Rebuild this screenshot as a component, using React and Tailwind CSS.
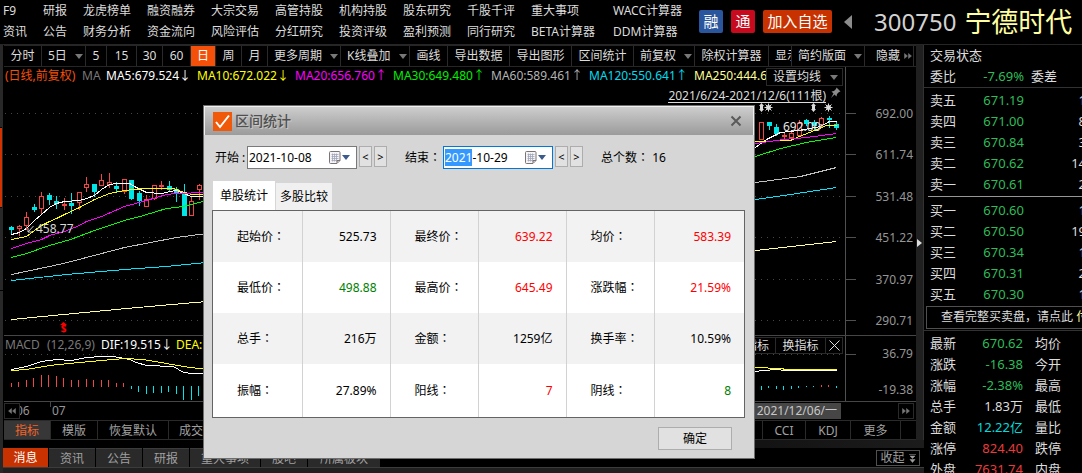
import { useEffect, useRef, useState } from "react";

const FEATURE_LINKS = [
  ["F9", "资讯"],
  ["研报", "公告"],
  ["龙虎榜单", "财务分析"],
  ["融资融券", "资金流向"],
  ["大宗交易", "风险评估"],
  ["高管持股", "分红研究"],
  ["机构持股", "投资评级"],
  ["股东研究", "盈利预测"],
  ["千股千评", "同行研究"],
  ["重大事项", "BETA计算器"],
  ["WACC计算器", "DDM计算器"],
];

const TOOLS = [
  { label: "分时", width: "w-[38px]" },
  { label: "5日", width: "w-[44px]", menu: true },
  { label: "5", width: "w-[21px]" },
  { label: "15", width: "w-[30px]" },
  { label: "30", width: "w-[26px]" },
  { label: "60", width: "w-[28px]" },
  { label: "日", width: "w-[25px]", active: true },
  { label: "周", width: "w-[26px]" },
  { label: "月", width: "w-[26px]" },
  { label: "更多周期", width: "w-[73px]", menu: true },
  { label: "K线叠加", width: "w-[69px]", menu: true },
  { label: "画线", width: "w-[38px]" },
  { label: "导出数据", width: "w-[62px]" },
  { label: "导出图形", width: "w-[62px]" },
  { label: "区间统计", width: "w-[62px]" },
  { label: "前复权", width: "w-[61px]", menu: true },
  { label: "除权计算器", width: "w-[74px]" },
];

const AVERAGES = [
  { text: "MA5:679.524", arrow: "↓", style: "w-[91px] text-white" },
  { text: "MA10:672.022", arrow: "↓", style: "w-[98px] text-[#ffff00]" },
  { text: "MA20:656.760", arrow: "↑", style: "w-[98px] text-[#ff00ff]" },
  { text: "MA30:649.480", arrow: "↑", style: "w-[98px] text-[#00f000]" },
  { text: "MA60:589.461", arrow: "↑", style: "w-[98px] text-[#b4b4b4]" },
  { text: "MA120:550.641", arrow: "↑", style: "w-[105px] text-[#00dcf0]" },
  { text: "MA250:444.6", arrow: "", style: "w-[74px] text-[#ffff96]" },
];

// Series are stored on a grid three times finer than the screen.
const LEFT = { x: 0, y: 100 };
const RIGHT = { x: 740, y: 100 };
const MACD_LEFT = { x: 0, y: 320 };
const MACD_RIGHT = { x: 740, y: 300 };

const RED = "#f04646";
const CYAN = "#00e6e6";

const LINES = [
  [LEFT, "#ffffff", [34,403,58,398,79,385,103,362,124,342,148,323,169,311,193,304,238,301,259,294,283,285,304,268,328,253,349,250,388,250,410,262,439,277,484,280,510,275,530,270,550,280,574,289,620,289]],
  [LEFT, "#ffff00", [34,419,79,408,103,392,124,376,148,364,169,355,193,343,238,322,283,298,328,280,373,271,430,266,520,266,545,275,575,284,620,284]],
  [LEFT, "#ff00ff", [34,445,79,431,124,418,148,407,193,395,238,376,259,364,304,348,373,318,440,300,500,283,530,279,620,277]],
  [LEFT, "#00ff00", [34,473,79,459,148,436,210,417,283,390,373,362,430,347,500,326,550,319,620,302]],
  [LEFT, "#c0c0c0", [34,524,190,491,373,443,530,412,620,399]],
  [LEFT, "#00e6ff", [34,541,200,524,373,509,500,498,620,488]],
  [LEFT, "#ffff96", [34,659,190,643,380,625,620,603]],
  [RIGHT, "#ffffff", [30,150,45,143,80,118,120,96,175,90,240,78,268,64,290,64]],
  [RIGHT, "#ffff00", [30,124,45,124,150,120,178,108,223,92,260,77,290,76]],
  [RIGHT, "#ff00ff", [30,132,45,130,130,118,200,112,290,100]],
  [RIGHT, "#00ff00", [30,174,45,169,120,144,200,126,290,112]],
  [RIGHT, "#c0c0c0", [30,249,45,247,180,228,290,203]],
  [RIGHT, "#00e6ff", [30,300,45,298,150,284,290,262]],
  [RIGHT, "#ffff96", [30,453,45,451,180,436,290,424]],
];

const MACD_LINES = [
  [MACD_LEFT, "#ffffff", [34,149,79,138,124,125,169,119,214,122,259,113,304,109,340,110,388,118,410,128,439,135,520,140,550,156,574,161,620,161]],
  [MACD_LEFT, "#ffff00", [34,152,79,148,148,136,238,126,304,120,373,115,430,119,500,130,550,140,620,148]],
  [MACD_RIGHT, "#ffffff", [30,217,45,215,70,210,110,208,135,212,175,210,290,210]],
  [MACD_RIGHT, "#ffff00", [30,202,45,203,120,205,140,208,290,208]],
];

// x, high, low, body top, body bottom, kind (u = hollow rise, f = filled rise, d = fall)
const CANDLES = [
  [LEFT, [
    [34,378,403,381,392,"d"],[58,375,408,379,387,"u"],[79,336,390,352,380,"u"],[103,312,338,321,332,"d"],
    [124,277,345,289,329,"u"],[148,279,317,286,300,"d"],[169,290,328,303,312,"d"],[193,295,332,314,320,"u"],
    [214,280,342,309,318,"d"],[238,277,332,277,311,"u"],[259,231,278,252,266,"u"],[283,252,292,252,276,"d"],
    [304,222,258,240,258,"u"],[328,219,264,246,255,"u"],[349,248,280,258,267,"d"],[373,238,282,238,276,"u"],
    [394,240,300,240,297,"d"],[418,275,318,279,304,"d"],[439,286,321,298,321,"u"],[463,255,302,255,298,"u"],
    [484,243,272,256,261,"f"],[508,243,275,258,272,"d"],[529,262,308,268,280,"d"],[553,252,350,276,350,"d"],
    [574,290,350,304,350,"u"],[598,252,300,255,272,"u"],
  ]],
  [RIGHT, [
    [64,67,122,67,122,"u"],[88,66,90,66,80,"d"],[109,72,110,82,102,"d"],[133,98,118,106,110,"f"],
    [154,92,118,100,114,"u"],[178,62,112,70,108,"u"],[199,58,80,60,72,"d"],[223,60,90,68,80,"d"],
    [244,52,85,56,76,"u"],[268,48,84,54,60,"d"],[289,68,92,72,84,"d"],
  ]],
];

const MACD_BARS = [
  [MACD_LEFT, RED, [[34,190,201],[55,187,201],[79,181,201],[100,175,201],[124,165,201],[145,165,201],[169,168,201],[190,174,201],[214,180,201],[235,180,201],[259,177,201],[280,180,201],[304,180,201],[325,180,201],[349,190,201],[370,190,201]]],
  [MACD_LEFT, CYAN, [[394,198,207],[415,198,218],[439,198,224],[460,198,221],[484,198,219],[505,198,218],[529,198,224],[550,198,240],[574,198,240],[595,198,228]]],
  [MACD_RIGHT, CYAN, [[64,258,272],[85,258,266],[109,258,268],[130,258,270],[154,258,269],[175,258,264],[199,258,261],[220,258,261],[289,258,264]]],
  [MACD_RIGHT, RED, [[244,255,261],[265,255,261]]],
];

const ASKS = [["卖五", "671.19", "1"], ["卖四", "671.00", "8"], ["卖三", "670.84", "3"], ["卖二", "670.62", "14"], ["卖一", "670.61", "2"]];
const BIDS = [["买一", "670.60", "1"], ["买二", "670.50", "19"], ["买三", "670.34", "1"], ["买四", "670.31", "2"], ["买五", "670.30", "1"]];

const UP = "text-[#e83c3c]";
const DOWN = "text-[#2dbd5a]";
const QUOTES = [
  ["最新", "670.62", DOWN, "均价"],
  ["涨跌", "-16.38", DOWN, "今开"],
  ["涨幅", "-2.38%", DOWN, "最高"],
  ["总手", "1.83万", "text-[#dcdcdc]", "最低"],
  ["金额", "12.22亿", "text-[#00dcdc]", "量比"],
  ["涨停", "824.40", UP, "跌停"],
  ["外盘", "7631.74", UP, "内盘"],
];

const STATS = [
  [["起始价", "525.73", ""], ["最终价", "639.22", "text-[#ff0000]"], ["均价", "583.39", "text-[#ff0000]"]],
  [["最低价", "498.88", "text-[#008000]"], ["最高价", "645.49", "text-[#ff0000]"], ["涨跌幅", "21.59%", "text-[#ff0000]"]],
  [["总手", "216万", ""], ["金额", "1259亿", ""], ["换手率", "10.59%", ""]],
  [["振幅", "27.89%", ""], ["阳线", "7", "text-[#ff0000]"], ["阴线", "8", "text-[#008000]"]],
];

const snap = (v) => Math.floor(v / 3);

function Polyline({ origin, color, data }) {
  const points = [];
  for (let i = 0; i < data.length; i += 2) {
    points.push(`${origin.x + snap(data[i]) + 0.5},${origin.y + snap(data[i + 1]) + 0.5}`);
  }
  return <polyline points={points.join(" ")} fill="none" stroke={color} strokeWidth="1" shapeRendering="crispEdges" />;
}

function Candle({ origin, data }) {
  const [x, high, low, top, bottom, kind] = data;
  const cx = origin.x + snap(x);
  const t = origin.y + snap(top);
  const h = Math.max(2, snap(bottom) - snap(top));
  const color = kind === "d" ? CYAN : RED;
  return (
    <g shapeRendering="crispEdges">
      <rect x={cx} y={origin.y + snap(high)} width="1" height={snap(low) - snap(high)} fill={color} />
      {kind === "u" ? (
        <rect x={cx - 1.5} y={t + 0.5} width="4" height={h - 1} fill="#000" stroke={color} />
      ) : (
        <rect x={cx - 2} y={t} width="5" height={h} fill={color} />
      )}
    </g>
  );
}

function Sun({ x, y }) {
  return (
    <g stroke="#dcdcdc">
      <path d={`M${x - 4} ${y}h8M${x} ${y - 4}v8M${x - 3} ${y - 3}l6 6M${x + 3} ${y - 3}l-6 6`} />
      <circle cx={x} cy={y} r="2" fill="#dcdcdc" />
    </g>
  );
}

function Updown({ x, y }) {
  return <path d={`M${x} ${y - 4.5}l2.5 3h-1v3h1l-2.5 3l-2.5 -3h1v-3h-1z`} fill="#dcdcdc" />;
}

function PriceChart() {
  return (
    <svg className="absolute inset-0 size-full" viewBox="4 67 841 268" preserveAspectRatio="none" aria-hidden="true">
      {[113, 154, 196, 237, 279, 320].map((y) => (
        <line key={y} x1="5" x2="841" y1={y + 0.5} y2={y + 0.5} stroke="#464646" strokeDasharray="1 5" />
      ))}
      {CANDLES.map(([origin, list], i) => list.map((c) => <Candle key={`${i}-${c[0]}`} origin={origin} data={c} />))}
      {LINES.map(([origin, color, data], i) => (
        <Polyline key={i} origin={origin} color={color} data={data} />
      ))}
      <path d="M33.500 226L28 232M28 228v4h4" fill="none" stroke="#d0d0d0" />
      <text x="36" y="233" fontSize="12" fill="#d8d8d8">458.77</text>
      <text x="783" y="131" fontSize="12" fill="#e6e6e6">692.00</text>
      <path d="M818 130l3 -4M819 125h3v3" fill="none" stroke="#d0d0d0" />
      <Updown x={761.5} y={107.5} />
      <Sun x={768.5} y={107.5} />
      <Updown x={813.5} y={107.5} />
      <Sun x={828.5} y={107.5} />
      <path d="M63.500 322l3.500 3h-7z" fill="#ff0000" />
      <text x="63.500" y="332" fontSize="10" fontWeight="700" textAnchor="middle" fill="#ff0000">$</text>
    </svg>
  );
}

function MacdChart() {
  return (
    <svg className="absolute inset-0 size-full" viewBox="4 336 841 65" preserveAspectRatio="none" aria-hidden="true">
      <line x1="5" x2="841" y1="354.500" y2="354.500" stroke="#464646" strokeDasharray="1 5" />
      {MACD_BARS.map(([origin, color, bars]) =>
        bars.map(([x, top, bottom]) => (
          <rect key={`${origin.x}-${x}`} x={origin.x + snap(x)} y={origin.y + snap(top)} width="1" height={snap(bottom) - snap(top)} fill={color} />
        ))
      )}
      {MACD_LINES.map(([origin, color, data], i) => (
        <Polyline key={i} origin={origin} color={color} data={data} />
      ))}
    </svg>
  );
}

function Caret({ className = "text-[#787878]" }) {
  return (
    <svg className={`shrink-0 ${className}`} width="8" height="5" viewBox="0 0 8 5" aria-hidden="true">
      <path d="M0 0h8L4 5z" fill="currentColor" />
    </svg>
  );
}

function DoubleArrow({ left }) {
  return (
    <svg className={left ? "rotate-180" : ""} width="8" height="6" viewBox="0 0 8 6" aria-hidden="true">
      <path d="M0.500 0.500L3.500 3L0.500 5.500zM4.500 0.500L7.500 3L4.500 5.500z" fill="#787878" stroke="#787878" strokeWidth="0.500" />
    </svg>
  );
}

// Full-width colon centred in its cell.
function Colon() {
  return <span className="font-['Noto_Sans_CJK_TC',sans-serif]" lang="zh-Hant">：</span>;
}

function Header() {
  return (
    <header className="flex h-[45px] shrink-0 items-start border-b border-[#262626]">
      <nav className="grid shrink-0 grid-cols-[40px_40px_64px_64px_64px_64px_64px_64px_64px_82px_86px] pl-[3px]">
        {FEATURE_LINKS.map((pair) => (
          <div key={pair[0]} className="flex flex-col text-[12px] leading-[21px] whitespace-nowrap text-[#dcdcdc]">
            <a href="#">{pair[0]}</a>
            <a href="#">{pair[1]}</a>
          </div>
        ))}
      </nav>
      <div className="flex shrink-0 items-center gap-2 pt-[10px] text-[15px] text-white">
        <span className="flex h-[23px] w-[24px] items-center justify-center rounded-xs bg-[#2a569e]">融</span>
        <span className="flex h-[23px] w-[24px] items-center justify-center rounded-xs bg-[#c80a1e]">通</span>
        <button className="flex h-[23px] w-[69px] items-center justify-center rounded-xs bg-[#c83200]">加入自选</button>
        <button aria-label="上一只" className="ml-1">
          <svg width="8" height="14" viewBox="0 0 8 14" aria-hidden="true">
            <path d="M8 0v14L0 7z" fill="#8c8c8c" />
          </svg>
        </button>
      </div>
      <h1 className="ml-[22px] flex shrink-0 items-center gap-2 pt-1 leading-[36px]">
        <span className="text-[24px] text-[#d2d2d2]">300750</span>
        <span className="text-[27px] text-[#ffffa0]">宁德时代</span>
      </h1>
    </header>
  );
}

function Toolbar() {
  const cell = "flex shrink-0 items-center border-r border-[#2a2a2a] overflow-hidden";
  return (
    <div className="flex h-[22px] shrink-0 border-t border-b border-[#262626] text-[12px] leading-[18px] whitespace-nowrap text-[#dcdcdc]">
      {TOOLS.map((t) => (
        <button
          key={t.label}
          className={`${cell} ${t.width} ${t.active ? "bg-[#f5500a] text-white" : ""} ${t.menu ? "justify-between pl-[6px] pr-[2px]" : "justify-center"}`}
        >
          {t.label}
          {t.menu && <Caret />}
        </button>
      ))}
      <button className={`${cell} w-[23px] pl-[6px]`}>显示</button>
      <button className={`${cell} w-[73px] justify-between pl-[6px] pr-[2px]`}>
        简约版面
        <Caret />
      </button>
      <button className={`${cell} w-[49px] gap-1 pl-[11px]`}>
        隐藏
        <DoubleArrow />
      </button>
    </div>
  );
}

function PricePane() {
  return (
    <section className="flex min-h-0 flex-1 border-b border-[#464646]">
      <div className="relative min-w-0 flex-1 border-r border-[#505050]">
        <PriceChart />
        <div className="relative flex h-[19px] overflow-hidden pl-px text-[12px] leading-[18px] whitespace-nowrap">
          <span className="w-[77px] shrink-0 text-[#f5500a]">(日线,前复权)</span>
          <span className="w-[24px] shrink-0 text-[#787878]">MA</span>
          {AVERAGES.map((a) => (
            <span key={a.text} className={`shrink-0 overflow-hidden ${a.style}`}>
              {a.text}
              {a.arrow}
            </span>
          ))}
          <button className="absolute top-px right-[2px] flex h-[18px] w-[77px] items-center justify-between border border-[#2a2a2a] bg-black pr-1 pl-[6px] text-[#dcdcdc]">
            设置均线
            <Caret />
          </button>
        </div>
        <div className="relative flex justify-end gap-1 pr-1 text-[12px]">
          <span className="mt-[2px] h-[15px] border-b border-[#dcdcdc] leading-[15px] text-[#dcdcdc]">2021/6/24-2021/12/6(111根)</span>
          <svg width="11" height="13" viewBox="0 0 11 13" aria-hidden="true">
            <path d="M6.500 1.500L10.500 5.500L9 6L7 8L6.500 10.500L4.500 8.500L1 12L3.500 7.500L1.500 5.500L4 5L6 3z" fill="#8c8c8c" />
          </svg>
        </div>
      </div>
      <div className="flex w-[70px] shrink-0">
        <div className="flex w-[10px] flex-col justify-between pt-[46px] pb-[14px]">
          {[0, 1, 2, 3, 4, 5].map((i) => (
            <span key={i} className="h-px bg-[#505050]" />
          ))}
        </div>
        <div className="flex flex-1 flex-col justify-between pt-[38px] pr-[3px] pb-[5px] text-right text-[12px] leading-[18px] text-[#969696]">
          {["692.00", "611.74", "531.48", "451.22", "370.97", "290.71"].map((v) => (
            <span key={v}>{v}</span>
          ))}
        </div>
      </div>
    </section>
  );
}

function MacdPane() {
  return (
    <section className="flex h-[66px] shrink-0 border-b border-[#464646]">
      <div className="relative min-w-0 flex-1 border-r border-[#505050]">
        <MacdChart />
        <div className="relative flex h-[18px] pl-px text-[12px] leading-[18px] whitespace-nowrap">
          <span className="w-[42px] text-[#787878]">MACD</span>
          <span className="w-[54px] text-[#787878]">(12,26,9)</span>
          <span className="w-[75px] text-white">DIF:19.515↓</span>
          <span className="text-[#ffff00]">DEA:</span>
          <div className="mt-px mr-[2px] ml-auto flex h-[17px] bg-black text-[#dcdcdc]">
            <button className="flex w-[50px] items-center justify-center border border-[#2a2a2a]">改指标</button>
            <button className="flex w-[50px] items-center justify-center border border-l-0 border-[#2a2a2a]">换指标</button>
            <button aria-label="关闭指标" className="flex w-[17px] items-center justify-center border border-l-0 border-[#2a2a2a]">
              <svg width="11" height="11" viewBox="0 0 11 11" aria-hidden="true">
                <path d="M0.500 0.500l10 10M10.500 0.500l-10 10" stroke="#dcdcdc" />
              </svg>
            </button>
          </div>
        </div>
      </div>
      <div className="flex w-[70px] shrink-0">
        <div className="w-[10px] pt-[18px]">
          <div className="h-px bg-[#505050]" />
        </div>
        <div className="flex flex-1 flex-col justify-between pt-[9px] pr-[3px] pb-[2px] text-right text-[12px] leading-[18px] text-[#969696]">
          <span>36.79</span>
          <span>-19.38</span>
        </div>
      </div>
    </section>
  );
}

function TimeAxis() {
  return (
    <div className="flex h-[18px] shrink-0 items-center text-[12px] leading-[16px] text-[#969696]">
      <button aria-label="向前" className="relative z-10 flex h-[16px] w-[16px] shrink-0 items-center justify-center border border-[#2a2a2a] bg-black">
        <DoubleArrow left />
      </button>
      <span className="-ml-1 w-[34px]">06</span>
      <span className="flex h-full items-start">
        <span className="h-[5px] w-px bg-[#464646]" />
        <span className="pt-px pl-px">07</span>
      </span>
      <span className="mr-[57px] ml-auto w-[92px] bg-[#464646] pr-[4px] text-right whitespace-nowrap text-[#c8c8c8]">2021/12/06/一</span>
      <button aria-label="向后" className="mr-[2px] flex h-[16px] w-[16px] shrink-0 items-center justify-center border border-[#2a2a2a]">
        <DoubleArrow />
      </button>
    </div>
  );
}

function IndicatorTabs() {
  const tab = "border-r border-[#2a2a2a] text-center";
  return (
    <div className="flex h-[20px] shrink-0 border-t border-b border-[#2a2a2a] text-[12px] leading-[20px] text-[#a0a0a0]">
      <button className={`${tab} w-[47px] bg-[#373737] text-[#f56428]`}>指标</button>
      <button className={`${tab} w-[47px]`}>模版</button>
      <button className={`${tab} w-[71px]`}>恢复默认</button>
      <button className={`${tab} w-[57px]`}>成交量</button>
      <button className={`${tab} ml-auto w-[44px] border-l`}>CCI</button>
      <button className={`${tab} w-[45px]`}>KDJ</button>
      <button className={`${tab} mr-[15px] w-[50px]`}>更多</button>
    </div>
  );
}

function NewsTabs() {
  const tab = "bg-[#2a2a2a] border-t border-[#3c3c3c]";
  return (
    <div className="flex h-[20px] shrink-0 gap-px border-b border-[#3c3c3c] text-[12px] leading-[20px] text-[#a0a0a0]">
      <button className="w-[45px] bg-[#c83200] text-white">消息</button>
      <button className={`${tab} w-[46px]`}>资讯</button>
      <button className={`${tab} w-[46px]`}>公告</button>
      <button className={`${tab} w-[46px]`}>研报</button>
      <button className={`${tab} w-[70px]`}>重大事项</button>
      <button className={`${tab} w-[46px]`}>股吧</button>
      <button className={`${tab} w-[72px]`}>所属板块</button>
      <button className="mt-[2px] mr-1 ml-auto flex h-[16px] w-[44px] items-center justify-center gap-1 border border-[#505050] leading-[14px]">
        收起
        <svg width="7" height="9" viewBox="0 0 7 9" aria-hidden="true">
          <path d="M0 0.500h7M1 2h5L3.500 4.500zM1 5.500h5L3.500 8.500z" fill="#a0a0a0" stroke="#a0a0a0" strokeWidth="0.500" />
        </svg>
      </button>
    </div>
  );
}

function Cols() {
  return (
    <colgroup>
      <col className="w-[46px]" />
      <col className="w-[61px]" />
      <col className="w-[55px]" />
    </colgroup>
  );
}

function OrderRows({ rows }) {
  return (
    <table className="w-[162px] table-fixed">
      <Cols />
      <tbody>
        {rows.map(([name, price, volume]) => (
          <tr key={name} className="h-[21px]">
            <th scope="row" className="pl-[6px] text-left font-normal">{name}</th>
            <td className="pr-[7px] text-right text-[#2dbd5a]">{price}</td>
            <td className="text-right">{volume}</td>
          </tr>
        ))}
      </tbody>
    </table>
  );
}

function QuotePanel() {
  return (
    <aside className="w-[158px] shrink-0 overflow-hidden text-[13px] leading-[20px] whitespace-nowrap text-[#dcdcdc]">
      <div className="h-[21px] pl-[6px]">交易状态</div>
      <table className="w-[162px] table-fixed border-b border-[#323232]">
        <Cols />
        <tbody>
          <tr className="h-[21px]">
            <th scope="row" className="pl-[6px] text-left font-normal">委比</th>
            <td className="pr-[7px] text-right text-[#2dbd5a]">-7.69%</td>
            <td>委差</td>
          </tr>
        </tbody>
      </table>
      <div className="mt-[2px]">
        <OrderRows rows={ASKS} />
      </div>
      <div className="mt-px ml-1 h-px bg-[#969696]" />
      <div className="mt-[3px]">
        <OrderRows rows={BIDS} />
      </div>
      <button className="mt-px ml-[2px] block h-[23px] w-[184px] overflow-hidden border border-[#505050] pl-[14px] text-left text-[12px]">
        查看完整买卖盘，请点此 <span className="text-[#ffffa0]">付</span>
      </button>
      <div className="mt-px h-px bg-[#323232]" />
      <table className="mt-[2px] w-[162px] table-fixed">
        <Cols />
        <tbody>
          {QUOTES.map(([name, value, color, other]) => (
            <tr key={name} className="h-[21px]">
              <th scope="row" className="pl-[6px] text-left font-normal">{name}</th>
              <td className={`pr-[8px] text-right ${color}`}>{value}</td>
              <th scope="row" className="pl-1 text-left font-normal">{other}</th>
            </tr>
          ))}
        </tbody>
      </table>
    </aside>
  );
}

function DateField({ id, value, onChange, inputRef, focused }) {
  const step = "h-[21px] w-[13px] border border-[#adadad] bg-[#e1e1e1] text-[11px] leading-[18px]";
  return (
    <div className="flex gap-[2px]">
      <div className={`flex h-[23px] w-[110px] items-center border bg-white pr-[6px] ${focused ? "border-[#0078d7]" : "border-[#7a7a7a]"}`}>
        <input
          id={id}
          ref={inputRef}
          value={value}
          onChange={(e) => onChange(e.target.value)}
          className="h-[17px] w-full min-w-0 bg-transparent pl-px leading-[17px] outline-none selection:bg-[#3399ff] selection:text-white"
        />
        <button aria-label="选择日期" className="flex shrink-0 items-center gap-px">
          <svg width="12" height="13" viewBox="0 0 12 13" aria-hidden="true">
            <path d="M1.500 0.500h8.500q1 0 1 1v8l-3 3h-6.500q-1 0 -1 -1v-10q0 -1 1 -1z" fill="#f5f5f8" stroke="#7d7373" />
            <path d="M2.500 3.500h7M2.500 5.500h7M2.500 7.500h7M2.500 9.500h5M3.500 2.500v8M5.500 2.500v8M7.500 2.500v8" stroke="#a0a5b9" strokeWidth="0.800" />
            <path d="M8 12V9.500h3" fill="#c8c8c8" stroke="#7d7373" />
          </svg>
          <Caret className="text-[#3c5a8c]" />
        </button>
      </div>
      <button aria-label="前一天" className={step}>&lt;</button>
      <button aria-label="后一天" className={step}>&gt;</button>
    </div>
  );
}

function RangeDialog() {
  const [start, setStart] = useState("2021-10-08");
  const [end, setEnd] = useState("2021-10-29");
  const endRef = useRef(null);

  useEffect(() => {
    endRef.current.focus();
    endRef.current.setSelectionRange(0, 4);
  }, []);

  return (
    <div
      role="dialog"
      aria-labelledby="range-title"
      className="absolute top-[105px] left-[203px] z-20 w-[552px] border border-[#6e6e6e] bg-[#d6d6d6] text-[12px] leading-[18px] text-black"
    >
      <div className="flex h-[29px] items-center border-t border-r border-l border-[#f0f0f0] bg-linear-to-b from-[#cdcdcd] to-[#9b9b9b] pr-[11px] pl-2">
        <svg width="19" height="19" viewBox="0 0 19 19" aria-hidden="true">
          <path d="M0 0h19v19H0z" fill="#f0580a" />
          <path d="M3 10l4 5L16 3.500" fill="none" stroke="#fff" strokeWidth="2" />
        </svg>
        <h2 id="range-title" className="ml-[3px] text-[14px] font-medium text-[#505050] [text-shadow:1px_1px_0_#c8c8c8]">区间统计</h2>
        <button aria-label="关闭" className="ml-auto">
          <svg width="12" height="12" viewBox="0 0 12 12" aria-hidden="true">
            <path d="M1.500 1.500l9 9M10.500 1.500l-9 9" stroke="#5a5a5a" strokeWidth="2" />
          </svg>
        </button>
      </div>
      <div className="flex items-center px-[11px] pt-[11px]">
        <label htmlFor="range-start" className="w-[32px] whitespace-nowrap">开始 :</label>
        <DateField id="range-start" value={start} onChange={setStart} />
        <label htmlFor="range-end" className="ml-[18px] w-[38px] whitespace-nowrap">结束<Colon /></label>
        <DateField id="range-end" value={end} onChange={setEnd} inputRef={endRef} focused />
        <span className="ml-[18px] whitespace-nowrap">总个数<Colon /> 16</span>
      </div>
      <div role="tablist" className="flex items-end gap-px pt-[12px] pl-[9px]">
        <button role="tab" aria-selected="true" className="h-[29px] w-[62px] bg-white">单股统计</button>
        <button role="tab" aria-selected="false" className="h-[27px] w-[56px] bg-[#f0f0f0]">多股比较</button>
      </div>
      <div className="mx-2 mr-[9px] border border-[#646464]">
        <table className="w-full table-fixed">
          <colgroup>
            <col className="w-[89px]" />
            <col className="w-[88px]" />
            <col className="w-[88px]" />
            <col className="w-[88px]" />
            <col className="w-[88px]" />
            <col />
          </colgroup>
          <tbody>
            {STATS.map((row, i) => (
              <tr key={i} className={`h-[51px] last:h-[53px] ${i % 2 ? "bg-white" : "bg-[#f2f2f2]"}`}>
                {row.map(([name, value, color]) => [
                  <th key={name} scope="row" className="border-r border-[#d2d2d2] pl-6 text-left font-normal">{name}<Colon /></th>,
                  <td key={`${name}v`} className={`border-r border-[#d2d2d2] pr-[13px] text-right last:border-r-0 ${color}`}>{value}</td>,
                ])}
              </tr>
            ))}
          </tbody>
        </table>
      </div>
      <div className="flex justify-end pt-[9px] pr-[22px] pb-[8px]">
        <button className="h-[23px] w-[74px] border border-[#adadad] bg-[#e1e1e1]">确定</button>
      </div>
    </div>
  );
}

export default function App() {
  return (
    <div className="relative flex h-screen flex-col overflow-hidden bg-black font-['Noto_Sans','Noto_Sans_CJK_SC',sans-serif]">
      <Header />
      <div className="flex min-h-0 flex-1">
        <div className="flex w-[3px] shrink-0 flex-col bg-[#282828] pt-[82px]">
          <div className="h-[81px] w-[2px] border-t border-b border-black bg-[#d23200]" />
          <div className="mt-[82px] h-px bg-black" />
        </div>
        <div className="flex min-w-0 flex-1 flex-col">
          <div className="flex min-h-0 flex-1">
            <main className="flex min-w-0 flex-1 flex-col pl-px">
              <Toolbar />
              <PricePane />
              <MacdPane />
              <TimeAxis />
              <IndicatorTabs />
            </main>
            <div className="flex w-[8px] shrink-0 items-center border-r border-[#323232] bg-[#202020]">
              <button aria-label="展开面板" className="ml-px">
                <svg width="5" height="8" viewBox="0 0 5 8" aria-hidden="true">
                  <path d="M0 0l5 4l-5 4z" fill="#dcdcdc" />
                </svg>
              </button>
            </div>
          </div>
          <div className="h-[8px] shrink-0 bg-linear-to-r from-black to-[#1c1c1c]" />
          <NewsTabs />
          <div className="h-[5px] shrink-0 bg-[#202020]" />
        </div>
        <QuotePanel />
      </div>
      <RangeDialog />
    </div>
  );
}
